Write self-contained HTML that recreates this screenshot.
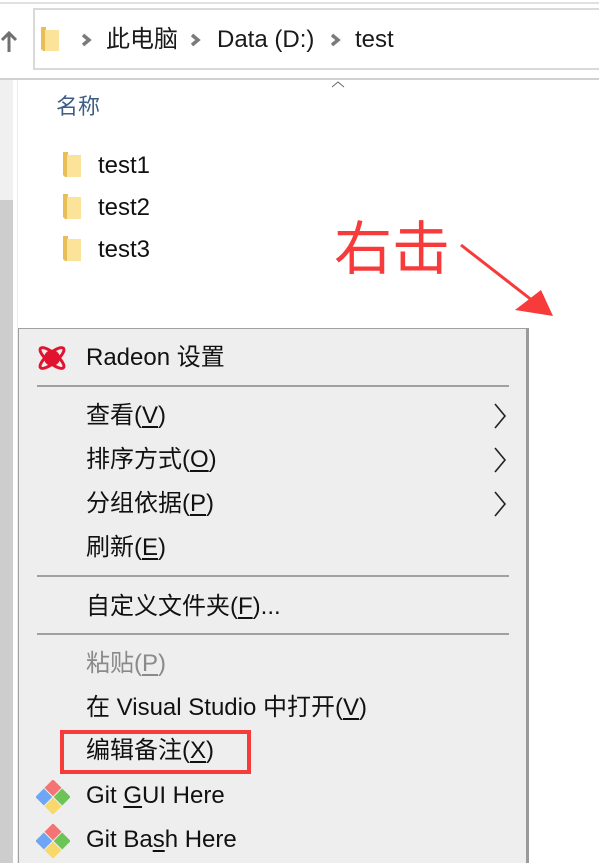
<!DOCTYPE html>
<html><head><meta charset="utf-8"><style>
*{margin:0;padding:0;box-sizing:border-box}
html{width:599px;height:863px;overflow:hidden}
body{width:599px;height:863px;overflow:hidden;background:#fff;position:relative;font-family:"Liberation Sans","Noto Sans CJK SC",sans-serif}
.a{position:absolute}
.t{position:absolute;font-size:24px;color:#111;white-space:nowrap;line-height:26px}
.sep{position:absolute;left:37px;width:472px;height:2px;background:#a0a0a0}
u{text-decoration:underline;text-underline-offset:3px}
</style></head><body>
<div class="a" style="left:0;top:2px;width:599px;height:2px;background:#e0e0e0"></div>
<div class="a" style="left:33px;top:8px;width:570px;height:62px;border:2px solid #d9d9d9;border-right:none"></div>
<div class="a" style="left:0;top:78px;width:599px;height:2px;background:#d0d0d0"></div>
<svg class="a" style="left:0;top:28px" width="20" height="26"><path d="M9 24V5M2 12l7-7 7 7" stroke="#707070" stroke-width="3" fill="none"/></svg>
<svg class="a" style="left:40px;top:26px" width="22" height="28"><path d="M1 1h5v3h13v21H3L1 23z" fill="#e9bf55"/><path d="M5 4h14v21H5z" fill="#fbe39a"/></svg>
<svg class="a" style="left:80px;top:32px" width="14" height="16"><path d="M3 3l6 5-6 5" stroke="#7a7a7a" stroke-width="3.5" fill="none"/></svg>
<div class="t" style="left:106px;top:27px;color:#1a1a1a">此电脑</div>
<svg class="a" style="left:189px;top:32px" width="14" height="16"><path d="M3 3l6 5-6 5" stroke="#7a7a7a" stroke-width="3.5" fill="none"/></svg>
<div class="t" style="left:217px;top:27px;color:#1a1a1a">Data (D:)</div>
<svg class="a" style="left:329px;top:32px" width="14" height="16"><path d="M3 3l6 5-6 5" stroke="#7a7a7a" stroke-width="3.5" fill="none"/></svg>
<div class="t" style="left:355px;top:27px;color:#1a1a1a">test</div>
<svg class="a" style="left:330px;top:79px" width="16" height="10"><path d="M2 8l6-5 6 5" stroke="#666" stroke-width="1" fill="none"/></svg>
<div class="a" style="left:0;top:80px;width:13px;height:120px;background:#f0f0f0"></div>
<div class="a" style="left:0;top:200px;width:13px;height:663px;background:#cdcdcd"></div>
<div class="a" style="left:17px;top:80px;width:1px;height:783px;background:#ececec"></div>
<div class="t" style="left:56px;top:94px;color:#3e5e86;font-size:22px">名称</div>
<svg class="a" style="left:62px;top:151px" width="20" height="28"><path d="M1 1h5v3h13v22H3L1 24z" fill="#e9bf55"/><path d="M5 4h14v22H5z" fill="#fbe39a"/></svg>
<div class="t" style="left:98px;top:153px">test1</div>
<svg class="a" style="left:62px;top:193px" width="20" height="28"><path d="M1 1h5v3h13v22H3L1 24z" fill="#e9bf55"/><path d="M5 4h14v22H5z" fill="#fbe39a"/></svg>
<div class="t" style="left:98px;top:195px">test2</div>
<svg class="a" style="left:62px;top:235px" width="20" height="28"><path d="M1 1h5v3h13v22H3L1 24z" fill="#e9bf55"/><path d="M5 4h14v22H5z" fill="#fbe39a"/></svg>
<div class="t" style="left:98px;top:237px">test3</div>
<div class="t" style="left:334px;top:218px;font-size:58px;line-height:64px;color:#f73a3a">右击</div>
<svg class="a" style="left:455px;top:235px" width="100" height="85"><path d="M6 10L78 66" stroke="#f73a3a" stroke-width="3"/><path d="M98 81L60 75 86 55z" fill="#f73a3a"/></svg>
<div class="a" style="left:18px;top:328px;width:511px;height:535px;background:#eeeeee;border:1px solid #a0a0a0;border-bottom:none;border-right:3px solid #9a9a9a"></div>
<svg class="a" style="left:35px;top:342px" width="34" height="32"><ellipse cx="17" cy="16" rx="15" ry="5" stroke="#e0142e" stroke-width="3" fill="none" transform="rotate(40 17 16)"/><ellipse cx="17" cy="16" rx="15" ry="5" stroke="#e0142e" stroke-width="3" fill="none" transform="rotate(-40 17 16)"/><circle cx="17" cy="16" r="8" fill="#e0142e"/></svg>
<div class="t" style="left:86px;top:345px">Radeon 设置</div>
<div class="sep" style="top:385px"></div>
<div class="t" style="left:86px;top:403px">查看(<u>V</u>)</div>
<div class="t" style="left:86px;top:447px">排序方式(<u>O</u>)</div>
<div class="t" style="left:86px;top:491px">分组依据(<u>P</u>)</div>
<svg class="a" style="left:492px;top:401px" width="20" height="120"><path d="M3 3l10 12-10 12M3 47l10 12-10 12M3 91l10 12-10 12" stroke="#222" stroke-width="1.6" fill="none"/></svg>
<div class="t" style="left:86px;top:535px">刷新(<u>E</u>)</div>
<div class="sep" style="top:575px"></div>
<div class="t" style="left:86px;top:594px">自定义文件夹(<u>F</u>)...</div>
<div class="sep" style="top:633px"></div>
<div class="t" style="left:86px;top:651px;color:#8a8a8a">粘贴(<u>P</u>)</div>
<div class="t" style="left:86px;top:695px">在 Visual Studio 中打开(<u>V</u>)</div>
<div class="t" style="left:86px;top:738px">编辑备注(<u>X</u>)</div>
<div class="a" style="left:60px;top:730px;width:191px;height:44px;border:4px solid #f73a3a"></div>
<svg class="a" style="left:36px;top:780px" width="34" height="34"><g transform="rotate(45 17 17)"><rect x="4.5" y="4.5" width="12" height="12" fill="#f47474"/><rect x="17.5" y="4.5" width="12" height="12" fill="#6cc456"/><rect x="4.5" y="17.5" width="12" height="12" fill="#6ea6f5"/><rect x="17.5" y="17.5" width="12" height="12" fill="#f8d86a"/></g></svg>
<div class="t" style="left:86px;top:783px">Git <u>G</u>UI Here</div>
<svg class="a" style="left:36px;top:824px" width="34" height="34"><g transform="rotate(45 17 17)"><rect x="4.5" y="4.5" width="12" height="12" fill="#f47474"/><rect x="17.5" y="4.5" width="12" height="12" fill="#6cc456"/><rect x="4.5" y="17.5" width="12" height="12" fill="#6ea6f5"/><rect x="17.5" y="17.5" width="12" height="12" fill="#f8d86a"/></g></svg>
<div class="t" style="left:86px;top:827px">Git Ba<u>s</u>h Here</div>
</body></html>
